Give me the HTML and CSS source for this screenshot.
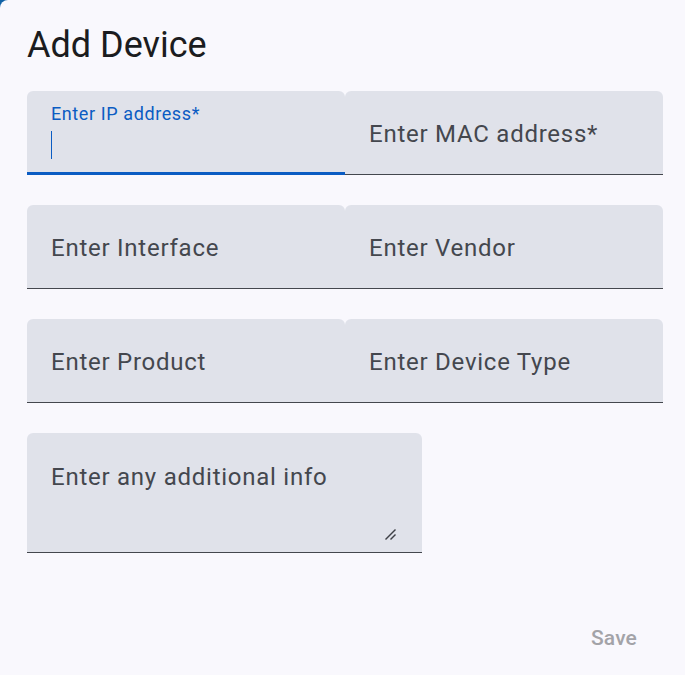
FILE: index.html
```html
<!DOCTYPE html>
<html lang="en">
<head>
<meta charset="utf-8">
<title>Add Device</title>
<link rel="stylesheet" href="styles.css">
</head>
<body>
<main class="dialog">
  <h1 class="title">Add Device</h1>
  <div class="grid">
    <div class="field focused">
      <span class="float-label">Enter IP address*</span>
      <span class="input-line"><span class="caret"></span></span>
    </div>
    <div class="field"><span class="ph">Enter MAC address*</span></div>
    <div class="field"><span class="ph">Enter Interface</span></div>
    <div class="field"><span class="ph">Enter Vendor</span></div>
    <div class="field"><span class="ph">Enter Product</span></div>
    <div class="field"><span class="ph">Enter Device Type</span></div>
  </div>
  <div class="field area">
    <span class="ph">Enter any additional info</span>
    <svg class="resize" width="14" height="14" viewBox="0 0 14 14">
      <line x1="1.5" y1="12.5" x2="11.5" y2="2.5" stroke="#3e4047" stroke-width="1.4"/>
      <line x1="6.5" y1="12.5" x2="11.5" y2="7.5" stroke="#3e4047" stroke-width="1.4"/>
    </svg>
  </div>
  <div class="actions">
    <button class="btn" type="button" disabled>Save</button>
  </div>
</main>
</body>
</html>
```

FILE: styles.css
```css
html {
  background: #1162a6;
}
body {
  margin: 0;
  font-family: Roboto, "Liberation Sans", sans-serif;
}
.dialog {
  box-sizing: border-box;
  min-height: 675px;
  background: #f9f8fd;
  border-top-left-radius: 8px;
  padding: 23px 22px 0 27px;
  display: flex;
  flex-direction: column;
}
.title {
  margin: 0;
  font-size: 36px;
  line-height: 44px;
  font-weight: 400;
  color: #1b1c20;
}
.grid {
  margin-top: 24px;
  display: grid;
  grid-template-columns: 318px 318px;
  grid-auto-rows: 84px;
  row-gap: 30px;
}
.field {
  box-sizing: border-box;
  background: #e0e2ea;
  border-top-left-radius: 6px;
  border-top-right-radius: 6px;
  border-bottom: 1px solid #44474e;
  padding: 3px 24px 0;
  display: flex;
  align-items: center;
  position: relative;
}
.ph {
  font-size: 24px;
  letter-spacing: 0.75px;
  color: #44474e;
  line-height: 36px;
}
.field.focused {
  border-bottom: 3px solid #0b5cc3;
  flex-direction: column;
  align-items: flex-start;
  justify-content: flex-start;
  padding-top: 14px;
}
.float-label {
  font-size: 18px;
  line-height: 18px;
  letter-spacing: 0.6px;
  color: #0b5cc3;
}
.input-line {
  margin-top: 7px;
  height: 30px;
  display: flex;
  align-items: center;
}
.caret {
  width: 1px;
  height: 28px;
  background: #0b5cc3;
}
.field.area {
  margin-top: 30px;
  width: 395px;
  height: 120px;
  align-items: flex-start;
  padding-top: 26px;
}
.resize {
  position: absolute;
  right: 24px;
  bottom: 11px;
}
.actions {
  margin-top: 65px;
  display: flex;
  justify-content: flex-end;
  padding-right: 2px;
}
.btn {
  border: 0;
  background: transparent;
  font-family: Roboto, "Liberation Sans", sans-serif;
  font-size: 21px;
  font-weight: 500;
  letter-spacing: 0.15px;
  color: #a3a3a8;
  padding: 0 24px;
  height: 40px;
  line-height: 40px;
}
```
